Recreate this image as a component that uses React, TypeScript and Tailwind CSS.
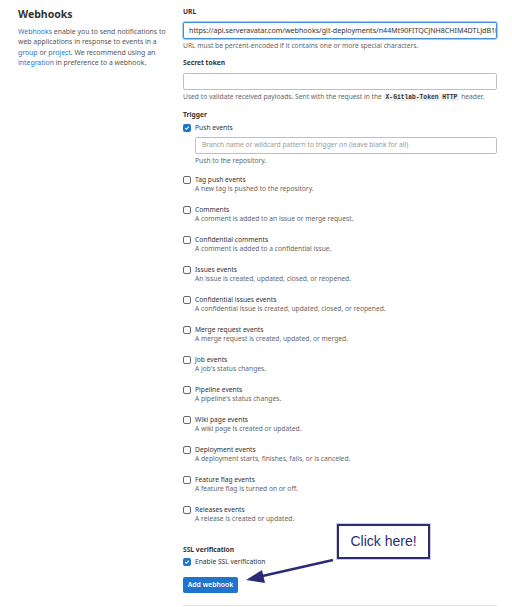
import React from "react";

const events: [string, string][] = [
    ["Tag push events", "A new tag is pushed to the repository."],
    ["Comments", "A comment is added to an issue or merge request."],
    ["Confidential comments", "A comment is added to a confidential issue."],
    ["Issues events", "An issue is created, updated, closed, or reopened."],
    ["Confidential issues events", "A confidential issue is created, updated, closed, or reopened."],
    ["Merge request events", "A merge request is created, updated, or merged."],
    ["Job events", "A job's status changes."],
    ["Pipeline events", "A pipeline's status changes."],
    ["Wiki page events", "A wiki page is created or updated."],
    ["Deployment events", "A deployment starts, finishes, fails, or is canceled."],
    ["Feature flag events", "A feature flag is turned on or off."],
    ["Releases events", "A release is created or updated."],
];

const Checkbox: React.FC<{ checked?: boolean }> = ({ checked }) =>
    checked ? (
        <span className="w-[8px] h-[8px] rounded-[2px] bg-[#1f75cb] flex items-center justify-center shrink-0">
            <svg width="6" height="6" viewBox="0 0 6 6">
                <path d="M1.2 3.1 L2.5 4.3 L4.8 1.6" fill="none" stroke="white" strokeWidth="1.1" />
            </svg>
        </span>
    ) : (
        <span className="w-[8px] h-[8px] rounded-[2px] border border-[#666] bg-white shrink-0" />
    );

const CheckRow: React.FC<{ label: string; checked?: boolean }> = ({ label, checked }) => (
    <div className="flex items-center gap-[4px] h-[9px] leading-[9px]">
        <Checkbox checked={checked} />
        <span className="text-[#333]">{label}</span>
    </div>
);

export default function App() {
    return (
        <div
            className="relative flex w-[512px] h-[607px] bg-white overflow-hidden text-[6.7px] text-[#333]"
            style={{ fontFamily: "'Noto Sans', 'Liberation Sans', sans-serif" }}
        >
            <div className="w-[183px] pl-[18px] pr-[14px] pt-[7px]">
                <h2 className="text-[10.5px] font-bold leading-[14px] text-[#333]">Webhooks</h2>
                <p className="mt-[6px] text-[6.9px] leading-[10.3px] text-[#555]">
                    <span className="text-[#1f75cb]">Webhooks</span> enable you to send notifications to web
                    applications in response to events in a <span className="text-[#1f75cb]">group</span> or{" "}
                    <span className="text-[#1f75cb]">project</span>. We recommend using an{" "}
                    <span className="text-[#1f75cb]">integration</span> in preference to a webhook.
                </p>
            </div>

            <div className="w-[314px] pt-[7px]">
                <div className="font-bold leading-[10px]">URL</div>
                <div className="mt-[5px] h-[17px] border border-[#428fdc] rounded-[2px] shadow-[0_0_0_1px_#a9cdf0] px-[5px] flex items-center overflow-hidden whitespace-nowrap text-[#333] text-[7.1px]">
                    https://api.serveravatar.com/webhooks/git-deployments/n44Mt90FITQCJNH8CHIM4DTLJdB1kE
                </div>
                <div className="mt-[2px] leading-[10px] text-[#666]">
                    URL must be percent-encoded if it contains one or more special characters.
                </div>

                <div className="mt-[7px] font-bold leading-[10px]">Secret token</div>
                <div className="mt-[5px] h-[17px] border border-[#bfbfbf] rounded-[2px]" />
                <div className="mt-[2px] leading-[10px] text-[#666] whitespace-nowrap">
                    Used to validate received payloads. Sent with the request in the{" "}
                    <code
                        className="bg-[#f0f0f0] rounded-[2px] px-[2px] text-[#333] text-[6.3px] font-bold"
                        style={{ fontFamily: "'Liberation Mono', monospace" }}
                    >
                        X-Gitlab-Token HTTP
                    </code>{" "}
                    header.
                </div>

                <div className="mt-[7px] font-bold leading-[10px]">Trigger</div>
                <div className="mt-[3px]">
                    <CheckRow label="Push events" checked />
                </div>
                <div className="ml-[12px] mt-[5px] h-[17px] border border-[#bfbfbf] rounded-[2px] px-[6px] flex items-center text-[#999]">
                    Branch name or wildcard pattern to trigger on (leave blank for all)
                </div>
                <div className="ml-[12px] mt-[2px] leading-[10px] text-[#666]">Push to the repository.</div>

                <div className="mt-[9px] flex flex-col gap-[11px]">
                    {events.map(([label, desc]) => (
                        <div key={label}>
                            <CheckRow label={label} />
                            <div className="ml-[12px] leading-[10px] text-[#666]">{desc}</div>
                        </div>
                    ))}
                </div>

                <div className="mt-[21px] font-bold leading-[10px]">SSL verification</div>
                <div className="mt-[2px]">
                    <CheckRow label="Enable SSL verification" checked />
                </div>
                <button className="mt-[11px] h-[16px] w-[55px] rounded-[2px] bg-[#1f75cb] text-white font-semibold text-[6.8px] flex items-center justify-center">
                    Add webhook
                </button>
                <div className="mt-[12px] border-t border-[#e5e5e5]" />
            </div>

            <svg className="absolute left-0 top-0" width="512" height="607">
                <line x1="333" y1="560" x2="258" y2="577" stroke="#2e2a78" strokeWidth="2.5" />
                <polygon points="246,580 262,570 265,583" fill="#2e2a78" />
            </svg>
            <div className="absolute left-[337px] top-[524px] w-[93px] h-[35px] bg-white border-[2.5px] border-[#2e2a78] shadow-[0_0_0_1px_#cfcfd8] flex items-center justify-center">
                <span className="text-[14px] text-[#2e2a78]" style={{ fontFamily: "'Liberation Sans', Arial, sans-serif" }}>
                    Click here!
                </span>
            </div>
        </div>
    );
}
